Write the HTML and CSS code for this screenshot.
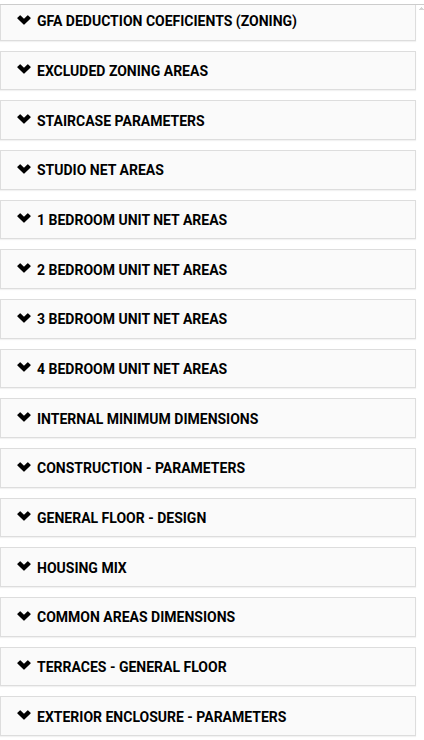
FILE: index.html
```html
<!DOCTYPE html>
<html lang="en">
<head>
<meta charset="utf-8">
<meta name="viewport" content="width=device-width, initial-scale=1">
<title>Parameters</title>
<link rel="stylesheet" href="styles.css">
</head>
<body>
<svg class="sprite" aria-hidden="true">
  <symbol id="chevron" viewBox="0 0 14 10"><path d="M2.8 0.4Q3.2 0.2 3.6 0.5L7 3.8 10.4 0.5Q10.8 0.2 11.2 0.5L13.6 2.8Q13.9 3.2 13.6 3.6L7.4 9.5Q7 9.8 6.6 9.5L0.4 3.6Q0.1 3.2 0.4 2.8Z"/></symbol>
</svg>
<main class="scroller">
  <div class="sections">
    <button class="section" type="button"><svg class="chevron" aria-hidden="true"><use href="#chevron"/></svg>GFA DEDUCTION COEFICIENTS (ZONING)</button>
    <button class="section" type="button"><svg class="chevron" aria-hidden="true"><use href="#chevron"/></svg>EXCLUDED ZONING AREAS</button>
    <button class="section" type="button"><svg class="chevron" aria-hidden="true"><use href="#chevron"/></svg>STAIRCASE PARAMETERS</button>
    <button class="section" type="button"><svg class="chevron" aria-hidden="true"><use href="#chevron"/></svg>STUDIO NET AREAS</button>
    <button class="section" type="button"><svg class="chevron" aria-hidden="true"><use href="#chevron"/></svg>1 BEDROOM UNIT NET AREAS</button>
    <button class="section" type="button"><svg class="chevron" aria-hidden="true"><use href="#chevron"/></svg>2 BEDROOM UNIT NET AREAS</button>
    <button class="section" type="button"><svg class="chevron" aria-hidden="true"><use href="#chevron"/></svg>3 BEDROOM UNIT NET AREAS</button>
    <button class="section" type="button"><svg class="chevron" aria-hidden="true"><use href="#chevron"/></svg>4 BEDROOM UNIT NET AREAS</button>
    <button class="section" type="button"><svg class="chevron" aria-hidden="true"><use href="#chevron"/></svg>INTERNAL MINIMUM DIMENSIONS</button>
    <button class="section" type="button"><svg class="chevron" aria-hidden="true"><use href="#chevron"/></svg>CONSTRUCTION - PARAMETERS</button>
    <button class="section" type="button"><svg class="chevron" aria-hidden="true"><use href="#chevron"/></svg>GENERAL FLOOR - DESIGN</button>
    <button class="section" type="button"><svg class="chevron" aria-hidden="true"><use href="#chevron"/></svg>HOUSING MIX</button>
    <button class="section" type="button"><svg class="chevron" aria-hidden="true"><use href="#chevron"/></svg>COMMON AREAS DIMENSIONS</button>
    <button class="section" type="button"><svg class="chevron" aria-hidden="true"><use href="#chevron"/></svg>TERRACES - GENERAL FLOOR</button>
    <button class="section" type="button"><svg class="chevron" aria-hidden="true"><use href="#chevron"/></svg>EXTERIOR ENCLOSURE - PARAMETERS</button>
  </div>
  <div class="track" aria-hidden="true">
    <svg class="arrow" viewBox="0 0 5 3" shape-rendering="crispEdges"><path d="M2 0h1v1h1v1h1v1H0V2h1V1h1Z"/></svg>
  </div>
</main>
</body>
</html>
```

FILE: styles.css
```css
* {
  box-sizing: border-box;
}

body {
  display: flex;
  min-height: 100vh;
  margin: 0;
  padding-top: 4px;
  background: #fff;
  font-family: Roboto, "Liberation Sans", sans-serif;
}

.sprite {
  display: none;
}

.scroller {
  display: flex;
  flex: 1;
  overflow: hidden;
  border-top: 1px solid #ccc;
}

.sections {
  display: grid;
  flex: 1;
  grid-auto-rows: 1fr;
  gap: 10px;
  margin-top: -4px;
  margin-bottom: 4px;
}

.section {
  display: flex;
  align-items: center;
  gap: 6px;
  min-height: 38px;
  padding: 1px 16px 0;
  border: 1px solid #ddd;
  border-radius: 0;
  background: #fafafa;
  box-shadow: 0 1px 1px rgba(0, 0, 0, 0.05);
  color: #000;
  font: 700 14px/20px Roboto, "Liberation Sans", sans-serif;
  text-align: left;
  cursor: pointer;
}

.chevron {
  width: 14px;
  height: 10px;
  margin-bottom: 3px;
}

.track {
  width: 8px;
  padding: 2px 0 0 3px;
}

.arrow {
  display: block;
  width: 5px;
  height: 3px;
  fill: #d5d5d5;
}
```
